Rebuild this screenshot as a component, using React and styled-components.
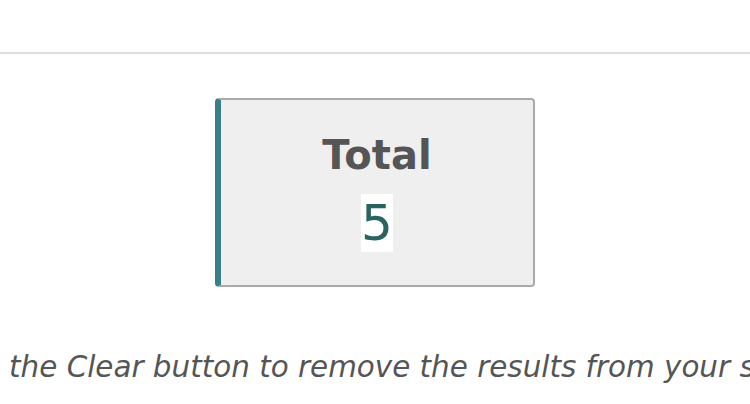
import styled, { createGlobalStyle } from "styled-components";

const GlobalStyle = createGlobalStyle`
  html, body {
    margin: 0;
    padding: 0;
    background: #fff;
    overflow: hidden;
  }
  body {
    font-family: "DejaVu Sans", Verdana, sans-serif;
    color: #555;
  }
`;

const Page = styled.div`
  width: 100%;
  overflow: hidden;
`;

const Header = styled.header`
  height: 52px;
  border-bottom: 2px solid #ddd;
`;

const Summary = styled.section`
  display: flex;
  justify-content: center;
  padding-top: 44px;
`;

const StatCard = styled.div`
  box-sizing: border-box;
  width: 320px;
  padding: 32px 0 33px;
  background: #efefef;
  border: 2px solid #aaa;
  border-left: 6px solid ${(p) => p.accent};
  border-radius: 4px;
  display: flex;
  flex-direction: column;
  align-items: center;
  gap: 16px;
`;

const StatLabel = styled.h3`
  margin: 0;
  font-size: 40px;
  font-weight: bold;
  line-height: normal;
  color: #555;
`;

const StatValue = styled.span`
  display: inline-block;
  background: #fff;
  font-size: 50px;
  line-height: normal;
  color: #2a6461;
`;

const Hint = styled.p`
  margin: 63px 0 0;
  padding-left: 9px;
  display: flex;
  justify-content: center;
  white-space: nowrap;
  font-size: 29.4px;
  font-style: italic;
  line-height: normal;
  color: #555;
`;

const App = () => {
  return (
    <Page>
      <GlobalStyle />
      <Header />
      <Summary>
        <StatCard accent="#377e86">
          <StatLabel>Total</StatLabel>
          <StatValue>5</StatValue>
        </StatCard>
      </Summary>
      <Hint>
        <span>Press the Clear button to remove the results from your screen</span>
      </Hint>
    </Page>
  );
};

export default App;
